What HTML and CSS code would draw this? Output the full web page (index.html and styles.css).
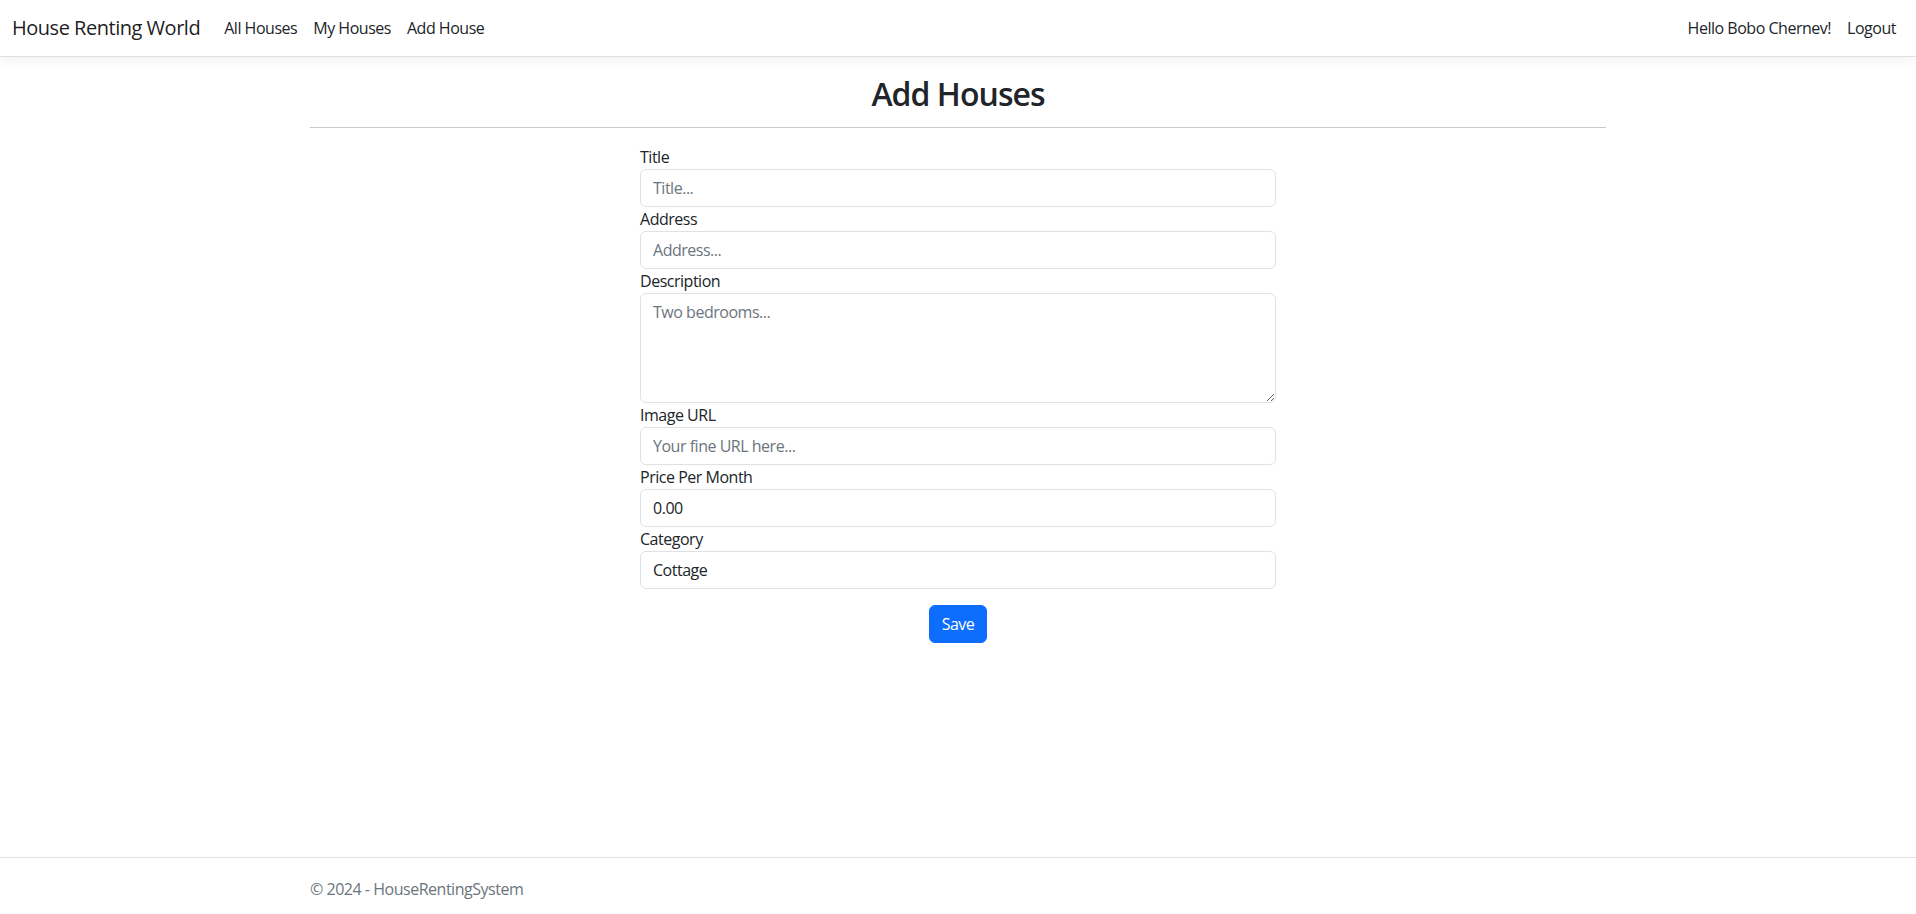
FILE: index.html
```html
<!DOCTYPE html>
<html lang="en">
<head>
<meta charset="utf-8">
<title>Add House - HouseRentingSystem</title>
<link rel="stylesheet" href="styles.css">
</head>
<body>
<header class="site-header">
  <nav class="navbar">
    <a class="brand" href="#">House Renting World</a>
    <ul class="nav-left">
      <li><a class="nav-link" href="#">All Houses</a></li>
      <li><a class="nav-link" href="#">My Houses</a></li>
      <li><a class="nav-link" href="#">Add House</a></li>
    </ul>
    <ul class="nav-right">
      <li><a class="nav-link" href="#">Hello Bobo Chernev!</a></li>
      <li><a class="nav-link" href="#">Logout</a></li>
    </ul>
  </nav>
</header>
<main class="container">
  <h2 class="page-title">Add Houses</h2>
  <hr class="divider">
  <div class="form-row">
    <form class="house-form">
      <div class="field">
        <label class="form-label" for="title">Title</label>
        <input class="form-control" id="title" type="text" placeholder="Title...">
      </div>
      <div class="field">
        <label class="form-label" for="address">Address</label>
        <input class="form-control" id="address" type="text" placeholder="Address...">
      </div>
      <div class="field">
        <label class="form-label" for="description">Description</label>
        <textarea class="form-control textarea" id="description" rows="4" placeholder="Two bedrooms..."></textarea>
      </div>
      <div class="field">
        <label class="form-label" for="imageUrl">Image URL</label>
        <input class="form-control" id="imageUrl" type="text" placeholder="Your fine URL here...">
      </div>
      <div class="field">
        <label class="form-label" for="price">Price Per Month</label>
        <input class="form-control" id="price" type="text" value="0.00">
      </div>
      <div class="field">
        <label class="form-label" for="category">Category</label>
        <select class="form-control select" id="category">
          <option>Cottage</option>
          <option>Single-Family</option>
          <option>Duplex</option>
        </select>
      </div>
      <div class="actions">
        <button class="btn-primary" type="button">Save</button>
      </div>
    </form>
  </div>
</main>
<footer class="footer">
  <div class="container footer-inner">&copy; 2024 - HouseRentingSystem</div>
</footer>
</body>
</html>
```

FILE: styles.css
```css
* { box-sizing: border-box; }
html, body { margin: 0; padding: 0; }
body {
  font-family: "Open Sans", "Noto Sans", "Liberation Sans", sans-serif;
  font-size: 16px;
  line-height: 1.5;
  letter-spacing: -0.03em;
  color: #212529;
  background: #fff;
  min-height: 100vh;
  display: flex;
  flex-direction: column;
}
a { text-decoration: none; }
ul { list-style: none; margin: 0; padding: 0; }

.site-header { margin-bottom: 16px; }
.navbar {
  display: flex;
  align-items: center;
  padding: 8px 12px;
  border-bottom: 1px solid #dee2e6;
  box-shadow: 0 4px 12px rgba(0,0,0,.05);
  background: #fff;
}
.brand {
  font-size: 20px;
  line-height: 30px;
  padding: 5px 0;
  margin-right: 16px;
  color: rgba(0,0,0,.9);
}
.nav-left { display: flex; flex: 1; }
.nav-right { display: flex; }
.nav-link {
  display: block;
  padding: 8px;
  line-height: 24px;
  color: #212529;
  font-size: 16px;
}

.container {
  width: 100%;
  max-width: 1320px;
  margin: 0 auto;
  padding: 0 12px;
}
.page-title {
  margin: 0;
  padding-top: 2px;
  text-align: center;
  font-size: 32px;
  font-weight: 600;
  line-height: 1.2;
  letter-spacing: -0.03em;
}
.divider {
  margin: 14px 0 17px;
  border: 0;
  border-top: 1px solid #212529;
  opacity: .25;
}
.form-row { display: flex; justify-content: center; }
.house-form { width: 636px; }
.form-label { display: block; }
.form-control {
  display: block;
  width: 100%;
  height: 38px;
  padding: 6px 12px;
  font-family: inherit;
  font-size: 16px;
  line-height: 24px;
  letter-spacing: inherit;
  color: #212529;
  background: #fff;
  border: 1px solid #dee2e6;
  border-radius: 6px;
  appearance: none;
  -webkit-appearance: none;
  outline: none;
}
.form-control::placeholder { color: #6c757d; opacity: 1; }
.textarea { height: 110px; resize: vertical; }
.select { cursor: pointer; }
.actions { display: flex; justify-content: center; margin-top: 16px; }
.btn-primary {
  font-family: inherit;
  font-size: 16px;
  line-height: 24px;
  letter-spacing: inherit;
  padding: 6px 12px;
  color: #fff;
  background: #0d6efd;
  border: 1px solid #0d6efd;
  border-radius: 6px;
  cursor: pointer;
}

.footer {
  margin-top: auto;
  border-top: 1px solid #dee2e6;
  height: 57px;
  padding-top: 1px;
  line-height: 60px;
  color: #6c757d;
  white-space: nowrap;
}
```
